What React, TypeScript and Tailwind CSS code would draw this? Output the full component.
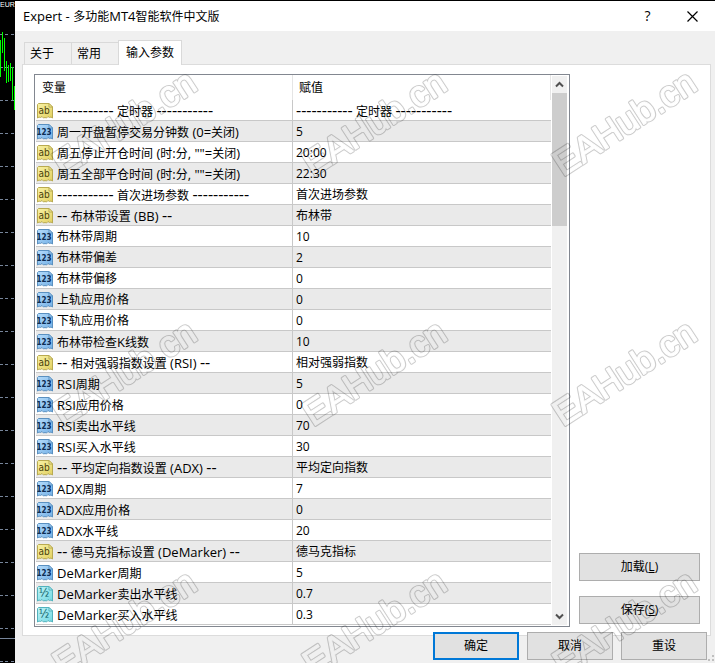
import { useState } from "react";

type ParamKind = "ab" | "123" | "½";

type Param = {
  kind: ParamKind;
  name: string;
  value: string;
};

const PARAMS: Param[] = [
  { kind: "ab", name: "----------- 定时器 -----------", value: "----------- 定时器 -----------" },
  { kind: "123", name: "周一开盘暂停交易分钟数 (0=关闭)", value: "5" },
  { kind: "ab", name: '周五停止开仓时间 (时:分, ""=关闭)', value: "20:00" },
  { kind: "ab", name: '周五全部平仓时间 (时:分, ""=关闭)', value: "22:30" },
  { kind: "ab", name: "----------- 首次进场参数 -----------", value: "首次进场参数" },
  { kind: "ab", name: "-- 布林带设置 (BB) --", value: "布林带" },
  { kind: "123", name: "布林带周期", value: "10" },
  { kind: "123", name: "布林带偏差", value: "2" },
  { kind: "123", name: "布林带偏移", value: "0" },
  { kind: "123", name: "上轨应用价格", value: "0" },
  { kind: "123", name: "下轨应用价格", value: "0" },
  { kind: "123", name: "布林带检查K线数", value: "10" },
  { kind: "ab", name: "-- 相对强弱指数设置 (RSI) --", value: "相对强弱指数" },
  { kind: "123", name: "RSI周期", value: "5" },
  { kind: "123", name: "RSI应用价格", value: "0" },
  { kind: "123", name: "RSI卖出水平线", value: "70" },
  { kind: "123", name: "RSI买入水平线", value: "30" },
  { kind: "ab", name: "-- 平均定向指数设置 (ADX) --", value: "平均定向指数" },
  { kind: "123", name: "ADX周期", value: "7" },
  { kind: "123", name: "ADX应用价格", value: "0" },
  { kind: "123", name: "ADX水平线", value: "20" },
  { kind: "ab", name: "-- 德马克指标设置 (DeMarker) --", value: "德马克指标" },
  { kind: "123", name: "DeMarker周期", value: "5" },
  { kind: "½", name: "DeMarker卖出水平线", value: "0.7" },
  { kind: "½", name: "DeMarker买入水平线", value: "0.3" },
];

const TABS = ["关于", "常用", "输入参数"];

const ICONS = {
  ab: { light: "#f8f2a6", dark: "#e2d060", edge: "#b9aa50", ink: "#4a420c", label: "ab", size: 10 },
  "123": { light: "#b5dcfb", dark: "#74b0e6", edge: "#5a90c0", ink: "#0c2c52", label: "123", size: 8 },
  "½": { light: "#bdf3f6", dark: "#74d8e2", edge: "#52b2bd", ink: "#0c5c66", label: "½", size: 12 },
};

function ParamIcon({ kind }: { kind: ParamKind }) {
  const c = ICONS[kind];
  const id = `paper-${kind}`;
  return (
    <svg width="16" height="16" viewBox="0 0 16 16" className="shrink-0" aria-hidden="true">
      <defs>
        <linearGradient id={id} x1="0" y1="0" x2="1" y2="1">
          <stop offset="0" stopColor={c.light} />
          <stop offset="1" stopColor={c.dark} />
        </linearGradient>
      </defs>
      <path
        d="M.5 1.500l1-1h10.500l3.500 3.500v11l-1.500-1-1.500 .5-1.500-1-1.500 1.500-1.500-.5-1.500 .5-1.500-1.500-1.500 1-1.500-.5-1.500 1z"
        fill={`url(#${id})`}
        stroke={c.edge}
        strokeWidth="1"
        strokeLinejoin="round"
      />
      <path d="M12 .5v3.500h3.500z" fill={c.light} stroke={c.edge} strokeWidth="1" strokeLinejoin="round" />
      <text
        x="7"
        y={kind === "½" ? 11 : 11}
        textAnchor="middle"
        fontFamily="'DejaVu Sans Condensed', 'DejaVu Sans', sans-serif"
        fontWeight={kind === "123" ? 700 : 400}
        fontSize={c.size}
        fill={c.ink}
      >
        {c.label}
      </text>
    </svg>
  );
}

// Latin runs are set a step larger than the hanzi around them, long rules larger still
function Mixed({ text }: { text: string }) {
  return (
    <>
      {text.split(/(-{2,}|[A-Za-z0-9()=:," ]+)/).map((run, i) => {
        if (/^-{2,}$/.test(run)) return <span key={i} className="text-base leading-4">{run}</span>;
        if (/^[A-Za-z0-9()=:," ]+$/.test(run)) return <span key={i} className="text-[13px]">{run}</span>;
        return run;
      })}
    </>
  );
}

const CANDLES = [
  [0, 39, 76],
  [2, 31, 52],
  [4, 37, 70],
  [6, 60, 82],
  [8, 64, 81],
  [10, 62, 80],
  [12, 66, 99],
  [14, 85, 109],
];

function ChartStrip() {
  return (
    <svg className="absolute inset-0 h-full w-full" aria-hidden="true">
      <defs>
        <pattern id="grid" width="15" height="33" patternUnits="userSpaceOnUse">
          <path d="M0 .5h3M5 .5h3M11 .5h3" stroke="#77859a" />
        </pattern>
      </defs>
      <rect y="20" width="15" height="100%" fill="url(#grid)" />
      <rect y="637" width="15" height="1" fill="#77859a" />
      {CANDLES.map(([x, top, bottom]) => (
        <rect key={x} x={x} y={top} width="1" height={bottom - top} fill="#00ff00" />
      ))}
      <text x="0" y="6" fontFamily="'Liberation Sans', sans-serif" fontSize="7" fill="#fff">
        EUR
      </text>
    </svg>
  );
}

function Watermark() {
  const text = {
    x: 63,
    y: 177,
    transform: "rotate(-33 63 177)",
    fontFamily: "'Liberation Sans', sans-serif",
    fontSize: 36,
    strokeLinejoin: "round" as const,
  };
  return (
    <svg className="pointer-events-none absolute inset-0 h-full w-full" aria-hidden="true">
      <defs>
        <mask id="outline" maskUnits="userSpaceOnUse" x="0" y="0" width="250" height="250">
          <text {...text} fill="#fff" stroke="#fff" strokeWidth="3">EAHub.cn</text>
          <text {...text} fill="#000" stroke="#000" strokeWidth="1">EAHub.cn</text>
        </mask>
        <pattern id="mark" width="250" height="250" patternUnits="userSpaceOnUse">
          <rect width="250" height="250" fill="#000" fillOpacity="0.2" mask="url(#outline)" />
        </pattern>
      </defs>
      <rect width="100%" height="100%" fill="url(#mark)" />
    </svg>
  );
}

function Chevron({ down = false }: { down?: boolean }) {
  return (
    <svg width="9" height="7" viewBox="0 0 9 7" className={down ? "rotate-180" : ""} aria-hidden="true">
      <path d="M1 5.500l3.500-3.500L8 5.500" fill="none" stroke="#505050" strokeWidth="2" />
    </svg>
  );
}

const plainButton = "h-7 border border-[#adadad] bg-[#e1e1e1] text-center";

export default function App() {
  const [tab, setTab] = useState("输入参数");

  return (
    <div className="relative flex min-h-screen overflow-hidden bg-black pt-px font-['Open_Sans','Noto_Sans_CJK_SC',sans-serif] text-xs text-black">
      <div className="relative w-[15px] shrink-0 overflow-hidden">
        <ChartStrip />
      </div>

      <div className="flex min-w-0 flex-1 flex-col bg-[#f0f0f0]">
        <header className="flex h-[30px] shrink-0 items-center bg-white pl-2">
          <h1 className="flex-1 leading-5">
            <span className="text-[13px]">Expert - </span>
            <Mixed text="多功能MT4智能软件中文版" />
          </h1>
          <button type="button" aria-label="帮助" className="h-full w-[45px] text-sm leading-5">
            ?
          </button>
          <button type="button" aria-label="关闭" className="flex h-full w-[45px] items-center justify-center">
            <svg width="11" height="11" viewBox="0 0 11 11" aria-hidden="true">
              <path d="M.5 .5l10 10M10.500 .5l-10 10" stroke="#000" strokeWidth="1.200" />
            </svg>
          </button>
        </header>

        <div role="tablist" className="mt-[9px] flex items-end pl-[9px]">
          {TABS.map((t) => (
            <button
              key={t}
              type="button"
              role="tab"
              aria-selected={t === tab}
              onClick={() => setTab(t)}
              className={
                t === tab
                  ? "relative -mb-px h-[25px] border border-b-0 border-[#d9d9d9] bg-white px-[7px] text-left"
                  : "h-[22px] w-[47px] border border-r-0 border-b-0 border-[#d9d9d9] pl-[5px] text-left"
              }
            >
              {t}
            </button>
          ))}
        </div>

        <main className="mr-1 ml-[7px] flex gap-[9px] border border-[#dcdcdc] bg-white pt-[9px] pr-2.5 pb-2 pl-[11px]">
          <div className="flex min-w-0 flex-1 border border-[#828790] p-px pt-0">
            <table className="min-w-0 flex-1 table-fixed border-separate border-spacing-0 text-left">
              <colgroup>
                <col className="w-[257px]" />
                <col />
              </colgroup>
              <thead>
                <tr className="h-[25px]">
                  <th className="border-r border-[#e5e5e5] p-0 pl-1.5 font-normal">变量</th>
                  <th className="border-r border-[#e5e5e5] p-0 pl-1.5 font-normal">赋值</th>
                </tr>
              </thead>
              <tbody>
                {PARAMS.map((p, i) => (
                  <tr key={i} className="h-[21px] even:bg-[#eaeaea]">
                    <td className="border-r border-b border-[#c8c8c8] p-0 pl-px">
                      <div className="flex h-5 items-center gap-1 overflow-hidden pt-0.5 leading-5 whitespace-pre">
                        <ParamIcon kind={p.kind} />
                        <span>
                          <Mixed text={p.name} />
                        </span>
                      </div>
                    </td>
                    <td className="border-b border-[#c8c8c8] p-0 pl-[3px]">
                      <div className="flex h-5 items-center overflow-hidden pt-0.5 leading-5 whitespace-pre">
                        <span>{/^[\d:.]+$/.test(p.value) ? p.value : <Mixed text={p.value} />}</span>
                      </div>
                    </td>
                  </tr>
                ))}
              </tbody>
            </table>
            <div className="mt-px mr-px ml-px flex w-[15px] shrink-0 flex-col bg-[#f0f0f0]">
              <button type="button" aria-label="向上滚动" className="flex h-[17px] items-center justify-center">
                <Chevron />
              </button>
              <div className="flex-1">
                <div className="h-[133px] bg-[#cdcdcd]" />
              </div>
              <button type="button" aria-label="向下滚动" className="flex h-[17px] items-center justify-center">
                <Chevron down />
              </button>
            </div>
          </div>

          <div className="flex w-[121px] shrink-0 flex-col justify-end gap-[15px] pb-[3px]">
            <button type="button" className={plainButton}>
              加载(<u>L</u>)
            </button>
            <button type="button" className={plainButton}>
              保存(<u>S</u>)
            </button>
          </div>
        </main>

        <footer className="relative -mt-1 flex justify-end gap-2 pr-2 pb-[3px]">
          <button type="button" className="h-7 w-[86px] border-2 border-[#0078d7] bg-[#e1e1e1] text-center">
            确定
          </button>
          <button type="button" className={`${plainButton} w-[86px]`}>
            取消
          </button>
          <button type="button" className={`${plainButton} w-[86px]`}>
            重设
          </button>
          <svg className="absolute right-0 bottom-0" width="8" height="8" aria-hidden="true">
            <path d="M5 0h2v2H5zM5 4h2v2H5zM1 4h2v2H1z" fill="#bfbfbf" />
          </svg>
        </footer>
      </div>

      <Watermark />
    </div>
  );
}
